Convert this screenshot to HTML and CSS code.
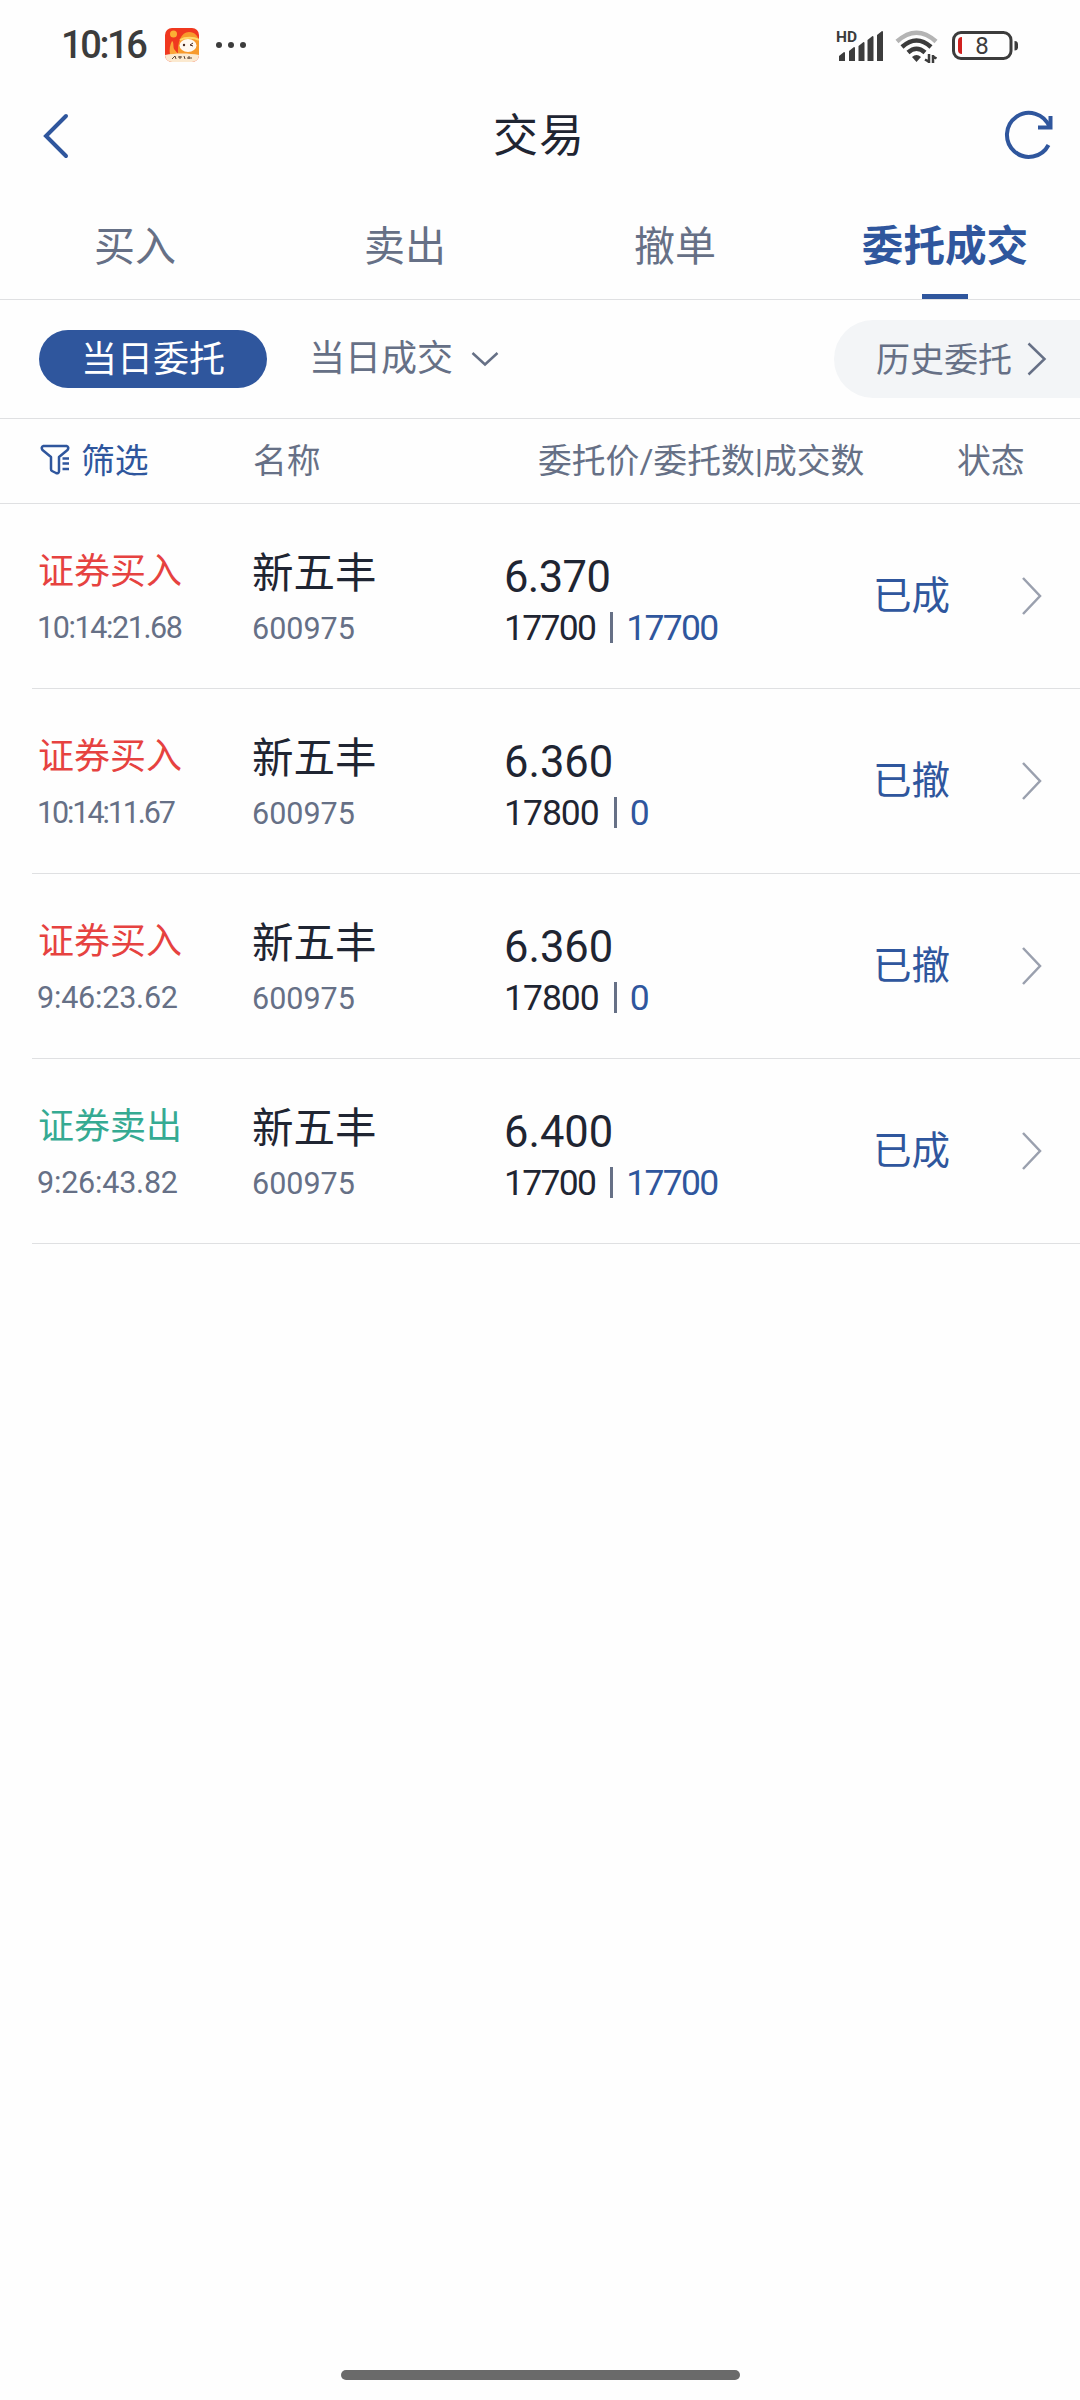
FILE: index.html
```html
<!DOCTYPE html>
<html lang="zh-CN">
<head>
    <meta charset="UTF-8">
    <meta name="viewport" content="width=device-width, initial-scale=1.0">
    <title>交易</title>
    <link rel="stylesheet" href="styles.css">
</head>
<body>
    <div class="status-bar">
        <span class="clock">10:16</span>
        <svg class="app-icon" width="34" height="34" viewBox="0 0 34 34">
            <defs>
                <clipPath id="app-clip"><rect width="34" height="34" rx="7"/></clipPath>
            </defs>
            <g clip-path="url(#app-clip)">
                <rect width="34" height="34" fill="#f0381f"/>
                <circle cx="8.500" cy="6" r="3.500" fill="#fbb034"/>
                <path d="M13 28C12 14 16 4 24 4c6 0 9 4 10 9v15z" fill="#f79a2c"/>
                <path d="M5 27c-1-6 0-10 2-14 2 1 1 5 2 8l5 6z" fill="#fba63a"/>
                <path d="M15 12c5-3 14-3 19 0" stroke="#ffd768" stroke-width="2" fill="none"/>
                <ellipse cx="23" cy="17.500" rx="8.500" ry="6.500" fill="#fff8f0"/>
                <circle cx="19" cy="17" r="1.200" fill="#4a2a22"/>
                <path d="M28 15l-3 2 3 1" stroke="#4a2a22" fill="none"/>
                <path d="M0 27c10-2 24-2 34 0v7H0z" fill="#fbe9cf"/>
                <path d="M7 31l3-3 1 3M13 29h4M15 28v3M19 28l1 3M22 30h5M24 28v3" stroke="#5b4636" fill="none"/>
            </g>
        </svg>
        <svg class="more-dots" width="32" height="8" viewBox="0 0 32 8" fill="#3c3c3c">
            <circle cx="4" cy="4" r="3"/>
            <circle cx="16" cy="4" r="3"/>
            <circle cx="28" cy="4" r="3"/>
        </svg>
        <svg class="signal" width="50" height="34" viewBox="0 0 50 34" fill="#3c3c3c">
            <text class="hd" x="0" y="13">HD</text>
            <path d="M3 27l5-4q1 0 1 1v8H3zM13 22l5-4q1 0 1 1v13h-6zM22.500 17l5-4q1 0 1 1v18h-6zM31.500 11l5-4q1 0 1 1v24h-6zM41 6l5-4q1 0 1 1v29h-6z"/>
        </svg>
        <svg class="wifi" width="44" height="34" viewBox="0 0 44 34" fill="none">
            <path d="M2 12.500Q21.500-5 41 12.500" stroke="#b4b4b4" stroke-width="4.500"/>
            <path d="M7 18Q21.500 5 36 18" stroke="#3c3c3c" stroke-width="4.500"/>
            <path d="M13 23.500Q21.500 16 30 23.500" stroke="#3c3c3c" stroke-width="4.500"/>
            <path d="M17 28q4.500-4 9 0l-4.500 5z" fill="#3c3c3c"/>
            <path d="M34 25v9M30 30.500l3.500 2M38 34v-8M38 27.500l3.500 2" stroke="#3c3c3c" stroke-width="2.500"/>
        </svg>
        <svg class="battery" width="68" height="30" viewBox="0 0 68 30">
            <rect x="1.500" y="1.500" width="57.500" height="26" rx="7.500" fill="none" stroke="#3c3c3c" stroke-width="3"/>
            <path d="M10 6v17q-4 0-4-4V10q0-4 4-4z" fill="#d0211f"/>
            <text class="level" x="30" y="22.500" text-anchor="middle">8</text>
            <path d="M62.500 10q3.500 0 3.500 3v3.500q0 3-3.500 3z" fill="#3c3c3c"/>
        </svg>
    </div>

    <div class="nav-bar">
        <svg width="27" height="48" viewBox="0 0 27 48" fill="none" stroke="#2f569d" stroke-width="4" stroke-linecap="round">
            <path d="M24 4L4 24l20 20"/>
        </svg>
        <h1 class="title">交易</h1>
        <svg width="52" height="52" viewBox="0 0 52 52" fill="none" stroke="#2f569d" stroke-width="4">
            <path d="M45.500 35A22 22 0 1 1 46.500 17"/>
            <path d="M35 17.500h12.500V6" stroke-linejoin="miter"/>
        </svg>
    </div>

    <div class="tabs">
        <div class="tab">买入</div>
        <div class="tab">卖出</div>
        <div class="tab">撤单</div>
        <div class="tab active">委托成交</div>
    </div>

    <div class="sub-tabs">
        <div class="pill">当日委托</div>
        <div class="today-deal">当日成交
            <svg width="28" height="16" viewBox="0 0 28 16" fill="none" stroke="#667086" stroke-width="2.500">
                <path d="M1.500 2L14 13.500 26.500 2"/>
            </svg>
        </div>
        <div class="history">历史委托
            <svg width="20" height="34" viewBox="0 0 20 34" fill="none" stroke="#667086" stroke-width="2.500">
                <path d="M1.500 1.500L17.500 17l-16 15.500"/>
            </svg>
        </div>
    </div>

    <div class="list-head">
        <div class="filter">
            <svg width="30" height="32" viewBox="0 0 30 32" fill="none" stroke="#2f569d" stroke-width="2.500" stroke-linejoin="round">
                <path d="M3.500 2h23q3 1 1 4l-8.500 7v14.500q-.5 2.500-3 1.500l-4-2q-1-.5-1-2V13L2.500 6q-2-3 1-4z"/>
                <path d="M22.500 14.500H29M22.500 19.500H29M22.500 25H29"/>
            </svg>
            筛选
        </div>
        <div>名称</div>
        <div class="head-price">委托价/委托数|成交数</div>
        <div class="head-state">状态</div>
    </div>

    <div class="orders">
        <div class="order">
            <div><div class="type buy">证券买入</div><div class="time ones-3">10:14:21.68</div></div>
            <div><div class="name">新五丰</div><div class="code">600975</div></div>
            <div>
                <div class="price sevens">6.370</div>
                <div class="qty"><span class="narrow">17700</span><i class="bar"></i><span class="done narrow">17700</span></div>
            </div>
            <div class="state">已成</div>
            <svg class="arrow" width="22" height="40" viewBox="0 0 22 40"><path d="M2 2l17 18L2 38"/></svg>
        </div>
        <div class="order">
            <div><div class="type buy">证券买入</div><div class="time ones-4">10:14:11.67</div></div>
            <div><div class="name">新五丰</div><div class="code">600975</div></div>
            <div>
                <div class="price">6.360</div>
                <div class="qty"><span>17800</span><i class="bar"></i><span class="done">0</span></div>
            </div>
            <div class="state">已撤</div>
            <svg class="arrow" width="22" height="40" viewBox="0 0 22 40"><path d="M2 2l17 18L2 38"/></svg>
        </div>
        <div class="order">
            <div><div class="type buy">证券买入</div><div class="time">9:46:23.62</div></div>
            <div><div class="name">新五丰</div><div class="code">600975</div></div>
            <div>
                <div class="price">6.360</div>
                <div class="qty"><span>17800</span><i class="bar"></i><span class="done">0</span></div>
            </div>
            <div class="state">已撤</div>
            <svg class="arrow" width="22" height="40" viewBox="0 0 22 40"><path d="M2 2l17 18L2 38"/></svg>
        </div>
        <div class="order">
            <div><div class="type sell">证券卖出</div><div class="time">9:26:43.82</div></div>
            <div><div class="name">新五丰</div><div class="code">600975</div></div>
            <div>
                <div class="price">6.400</div>
                <div class="qty"><span class="narrow">17700</span><i class="bar"></i><span class="done narrow">17700</span></div>
            </div>
            <div class="state">已成</div>
            <svg class="arrow" width="22" height="40" viewBox="0 0 22 40"><path d="M2 2l17 18L2 38"/></svg>
        </div>
    </div>

    <div class="home-bar"></div>
</body>
</html>
```

FILE: styles.css
```css
* {
    box-sizing: border-box;
}
body {
    margin: 0;
    width: 1080px;
    height: 2400px;
    display: flex;
    flex-direction: column;
    background: #fefefe;
    color: #1f2532;
    font-family: Roboto, "Noto Sans CJK SC", sans-serif;
    line-height: 1.2;
    white-space: nowrap;
    overflow: hidden;
}
svg {
    display: block;
    flex: none;
}

/* phone status bar */
.status-bar {
    height: 90px;
    padding: 2px 60px 0 61px;
    display: flex;
    align-items: center;
    color: #3c3c3c;
}
.clock {
    width: 104px;
    font-size: 38px;
    font-weight: 500;
    letter-spacing: -2.4px;
}
.app-icon {
    margin-top: -2px;
}
.more-dots {
    margin-left: 16px;
    margin-top: -2px;
}
.signal {
    margin-left: auto;
}
.hd {
    font-size: 15.5px;
    font-weight: 700;
}
.wifi {
    margin-left: 9px;
}
.battery {
    margin-left: 13px;
}
.level {
    font-size: 24px;
    fill: #3c3c3c;
}

/* title */
.nav-bar {
    height: 92px;
    padding: 0 25px 0 42px;
    display: flex;
    align-items: center;
    justify-content: space-between;
}
.title {
    margin: 0;
    padding: 1px 0 0 6px;
    font-size: 45px;
    font-weight: 400;
    letter-spacing: 1px;
}

/* main tabs */
.tabs {
    height: 118px;
    display: flex;
    border-bottom: 1px solid #dfe0e2;
}
.tab {
    flex: 1;
    display: flex;
    flex-direction: column;
    align-items: center;
    padding-top: 41px;
    font-size: 41px;
    line-height: 48px;
    color: #667086;
}
.tab.active {
    color: #2f569d;
    font-size: 41.6px;
    font-weight: 700;
}
.tab.active::after {
    content: "";
    width: 46px;
    height: 5px;
    margin-top: auto;
    background: #2f569d;
}

/* today / history */
.sub-tabs {
    height: 119px;
    padding-left: 39px;
    display: flex;
    align-items: center;
    border-bottom: 1px solid #dfe0e2;
    font-size: 36px;
    color: #667086;
}
.pill {
    width: 228px;
    height: 58px;
    border-radius: 29px;
    background: #2f569d;
    color: #fff;
    line-height: 60px;
    text-align: center;
}
.today-deal {
    margin-left: 42px;
    padding-top: 2px;
    display: flex;
    align-items: center;
    gap: 18px;
}
.today-deal svg {
    margin-top: -2px;
}
.history {
    width: 246px;
    height: 78px;
    margin-left: auto;
    padding: 2px 0 0 42px;
    display: flex;
    align-items: center;
    gap: 15px;
    border-radius: 39px 0 0 39px;
    background: #f3f5f7;
    font-size: 34px;
}
.history svg {
    margin-top: -3px;
}

/* list */
.list-head,
.order {
    display: grid;
    align-items: center;
}
.list-head {
    height: 85px;
    padding: 2px 0 0 40px;
    grid-template-columns: 213px 285px 419px 1fr;
    border-bottom: 1px solid #dfe0e2;
    font-size: 33.8px;
    color: #667086;
}
.filter {
    display: flex;
    align-items: center;
    gap: 11px;
    color: #2f569d;
}
.filter svg {
    margin-top: -3px;
}
.orders {
    padding-left: 32px;
}
.order {
    height: 185px;
    padding-left: 5px;
    grid-template-columns: 215px 252px 369px 148px 1fr;
    border-bottom: 1px solid #dfe0e2;
}
.type {
    font-size: 36px;
    line-height: 48px;
    margin-bottom: 16px;
    padding-left: 1px;
}
.buy {
    color: #e64240;
}
.sell {
    color: #35aa92;
}
.time,
.code {
    font-size: 30.5px;
    line-height: 32px;
    color: #667086;
}
.time {
    letter-spacing: -0.2px;
}
.time.ones-3 {
    letter-spacing: -1.4px;
}
.time.ones-4 {
    letter-spacing: -2.1px;
}
.name {
    font-size: 41.5px;
    line-height: 48px;
    margin: 2px 0 15px;
}
.price {
    font-size: 43.5px;
    line-height: 50px;
    margin-top: 13px;
}
.sevens {
    letter-spacing: -0.6px;
}
.qty {
    display: flex;
    align-items: center;
    font-size: 35.5px;
    line-height: 50px;
    letter-spacing: -1px;
}
.narrow {
    letter-spacing: -1.7px;
}
.bar {
    width: 3px;
    height: 31px;
    margin: 0 13px 0 15px;
    background: #667086;
}
.done,
.state {
    color: #2f569d;
}
.state {
    font-size: 38.5px;
}
.arrow {
    fill: none;
    stroke: #9aa0ae;
    stroke-width: 2.5px;
}

.home-bar {
    width: 399px;
    height: 10px;
    margin: auto auto 20px;
    border-radius: 5px;
    background: #6a6a6a;
}
```
